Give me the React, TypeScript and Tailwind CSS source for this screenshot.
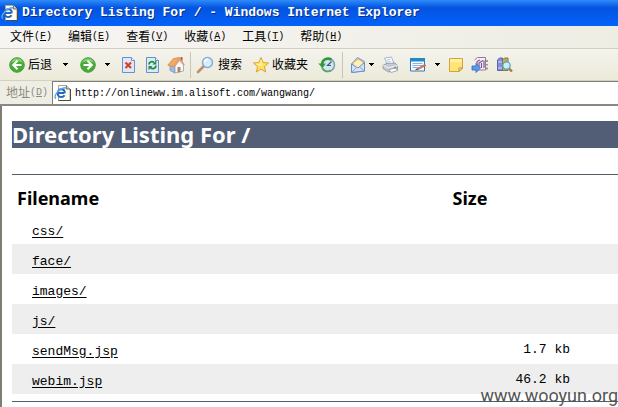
import type { ReactNode } from "react";

const cjk = "font-['Liberation_Sans','Noto_Sans_CJK_SC',sans-serif]";
const mono = "font-['Liberation_Mono','Noto_Sans_CJK_SC',monospace]";
const humanist = "font-['Noto_Sans','Open_Sans',sans-serif]";

const menus = [
  { label: "文件", key: "F" },
  { label: "编辑", key: "E" },
  { label: "查看", key: "V" },
  { label: "收藏", key: "A" },
  { label: "工具", key: "T" },
  { label: "帮助", key: "H" },
];

const files = [
  { name: "css/", size: "" },
  { name: "face/", size: "" },
  { name: "images/", size: "" },
  { name: "js/", size: "" },
  { name: "sendMsg.jsp", size: "1.7 kb" },
  { name: "webim.jsp", size: "46.2 kb" },
];

function Icon({ children }: { children: ReactNode }) {
  return (
    <svg viewBox="0 0 18 18" className="size-[18px] shrink-0" fill="none" aria-hidden="true">
      {children}
    </svg>
  );
}

function PageIcon() {
  return (
    <Icon>
      <path d="M4.500 1.500h8L16 5v11.500H4.500z" fill="#fdfcf0" stroke="#a8a490" />
      <path d="M12.500 1.500V5H16" fill="#d8d4bc" stroke="#6e6a58" />
      <path d="M16.500 5v11.500H4.500" stroke="#4d4a3e" />
      <path
        d="M10.300 9H3.800M10.800 9.300C10.800 6.800 9.300 5.300 7.300 5.300S3.700 7 3.700 9.200s1.500 3.900 3.600 3.900c1.500 0 2.600-.7 3.200-1.900"
        stroke="#2468c4"
        strokeWidth="2"
      />
      <path d="M2 14.500C-1.500 13 5 3.500 12.500 3.800" stroke="#58a8ec" strokeWidth="1.400" />
    </Icon>
  );
}

function ArrowIcon({ forward = false }: { forward?: boolean }) {
  return (
    <Icon>
      <circle cx="9" cy="9" r="7.300" fill="#43ab36" stroke="#4f9f45" />
      <path d="M3 7a6.300 6.300 0 0 1 12 0C12 4.500 6 4.500 3 7z" fill="#85d16f" />
      <path
        d={forward ? "M4.500 9h8M8.500 4.800L12.700 9l-4.200 4.200" : "M13.500 9h-8M9.500 4.800L5.300 9l4.200 4.200"}
        stroke="#fff"
        strokeWidth="2.200"
      />
    </Icon>
  );
}

function StopIcon() {
  return (
    <Icon>
      <path d="M3.500 1.500h9l3 3v12h-12z" fill="#dce9fb" stroke="#6d8fc8" />
      <path d="M12.500 1.500v3h3" fill="#fff" stroke="#6d8fc8" />
      <path d="M6.500 6.500l5.500 5.500M12 6.500L6.500 12" stroke="#df3f1c" strokeWidth="2.200" />
    </Icon>
  );
}

function RefreshIcon() {
  return (
    <Icon>
      <path d="M3.500 1.500h9l3 3v12h-12z" fill="#dce9fb" stroke="#6d8fc8" />
      <path d="M12.500 1.500v3h3" fill="#fff" stroke="#6d8fc8" />
      <path d="M6 8.500c0-3 3-3.500 5-2M13 9.500c0 3.200-3.500 4-5.500 2" stroke="#20923a" strokeWidth="1.800" />
      <path d="M9.500 8.500h3.800V4.200zM9.300 10H5.500v4.300z" fill="#20923a" />
    </Icon>
  );
}

function HomeIcon() {
  return (
    <Icon>
      <path d="M3 9v5.500L8 17V9.500z" fill="#9fbce0" stroke="#8096b8" strokeWidth=".8" />
      <path d="M8 10l4.500-5.500L16.500 9v6L8 17z" fill="#f6f8fc" stroke="#8ba0bd" strokeWidth=".8" />
      <path d="M10.500 11h3v5l-3 .600z" fill="#b48454" />
      <path d="M.8 9.200L6.500 2.500l6-1L7.800 9.500 5 10.500z" fill="#f3ab62" stroke="#d98545" strokeWidth=".8" />
      <path d="M7.500 10l5-7.200L17.300 9" stroke="#e0a068" strokeWidth="1.400" />
      <path d="M13.500 1h2v4.500l-2-2.500z" fill="#c6533b" />
    </Icon>
  );
}

function SearchIcon() {
  return (
    <Icon>
      <path d="M7.500 10.500l-5.500 5.500" stroke="#c08d68" strokeWidth="2.600" strokeLinecap="round" />
      <circle cx="11.500" cy="6.500" r="5" fill="#d7effc" stroke="#8aaad2" strokeWidth="1.500" />
      <path d="M8.500 6c.3-2 1.700-2.800 3.300-2.700" stroke="#fff" strokeWidth="1.500" />
    </Icon>
  );
}

function StarIcon() {
  return (
    <Icon>
      <path
        d="M9 1.500l2.100 5 5.400.500-4.100 3.600 1.300 5.400L9 13.100 4.300 16l1.300-5.400L1.500 7l5.400-.500z"
        fill="#ffe25c"
        stroke="#dfa22f"
        strokeLinejoin="round"
      />
      <path d="M9 4v5L4.500 8" stroke="#fff6b8" strokeWidth="1.200" />
    </Icon>
  );
}

function HistoryIcon() {
  return (
    <Icon>
      <circle cx="10" cy="9" r="6.500" fill="#d3e6f3" stroke="#7f9db0" strokeWidth="1.500" />
      <path d="M13.500 5.500L9.500 9.500H13" stroke="#48596a" strokeWidth="1.200" />
      <path d="M13.500 3.800C9.500 1 4.500 3.500 4 8" stroke="#2f9a39" strokeWidth="2.600" />
      <path d="M.3 7.500h7.600L4.500 12z" fill="#2f9a39" />
      <path d="M4.500 12.500c1.800 3 5 3.800 8 2" stroke="#5aa85e" strokeWidth="1.800" />
    </Icon>
  );
}

function MailIcon() {
  return (
    <Icon>
      <path d="M2.500 8L8.500 1.500l7 4V15l-13 1.500z" fill="#b9d3f4" stroke="#7b98c8" />
      <path d="M4 7L9 3l5 3v4l-5 2.500L4 10z" fill="#fff0b8" stroke="#e0a64c" strokeWidth=".8" />
      <path d="M2.500 8l6.500 4 6.500-5.500V15l-13 1.500z" fill="#d3e4fa" stroke="#6c8dc2" />
      <path d="M2.500 16.500l5-5M15.500 15l-5-4" stroke="#8aa8d5" />
    </Icon>
  );
}

function PrintIcon() {
  return (
    <Icon>
      <path d="M3.500 2l7-1 2.500 7-6 1.500z" fill="#fff" stroke="#8fa3c4" strokeWidth=".8" />
      <path d="M5.500 4l4-.500M6 6l4-.500" stroke="#9db6da" strokeWidth=".8" />
      <path d="M2 9l4-1.500 8-.500 2.500 2.500v4L7.500 16 2 12.500z" fill="#c5c9d4" stroke="#8a90a2" strokeWidth=".8" />
      <path d="M2 9l5.500 3 9-2.500" stroke="#f5f6fa" />
      <path d="M8 13.500l7-1.500 1.500 2.500-6.500 2z" fill="#fff" stroke="#8b91a5" strokeWidth=".8" />
      <path d="M13 11.500h2" stroke="#4fae50" strokeWidth="1.300" />
    </Icon>
  );
}

function EditIcon() {
  return (
    <Icon>
      <path d="M1.500 2.500h14v12.500h-14z" fill="#f6faff" stroke="#2f78b8" />
      <path d="M1 2h15v3.500H1z" fill="#2587c6" />
      <path d="M3.500 7.500h10M3.500 9.500h10M3.500 11.500h6" stroke="#8fb2d8" />
      <path d="M7.500 13L15.500 8.500l1.500 1-8.500 4.500z" fill="#e77851" stroke="#9d5d51" strokeWidth=".6" />
      <path d="M6.500 13.800l2-.8" stroke="#3c3f50" />
    </Icon>
  );
}

function NoteIcon() {
  return (
    <Icon>
      <path d="M2.500 2.500h13v9.500L12 15.500H2.500z" fill="#ffe477" stroke="#d3a536" />
      <path d="M3 3h12v3H3z" fill="#fff0a5" />
      <path d="M15.500 12H12v3.500z" fill="#fff8cd" stroke="#c48d26" />
    </Icon>
  );
}

function ResearchIcon() {
  return (
    <Icon>
      <path d="M3.500 4l3-2.500h8V14H6" fill="#f5eef6" stroke="#8f7b9a" />
      <path d="M6 9V5.500L9 4M8 11V7l4-2.500M10.500 12V7M13 4.500V12" stroke="#80548e" strokeWidth="1.200" />
      <path d="M16 4v2M16 8v1.500M16 11.500v2" stroke="#55405c" />
      <path d="M1 10h4V7.500l4.500 4.500L5 16.500V14H1z" fill="#5a9be8" stroke="#2f6abf" strokeWidth=".8" />
    </Icon>
  );
}

function BooksIcon() {
  return (
    <Icon>
      <path d="M2.500 4l2-2h3v12.500h-5z" fill="#8390d5" stroke="#5965a7" />
      <path d="M7.500 4l2-2h3.500v12.500H7.500z" fill="#b5ae63" stroke="#837c43" />
      <path d="M3 6h4M3 12h4" stroke="#d3d8f7" />
      <path d="M13.500 12l3.500 3.500" stroke="#a8793d" strokeWidth="2.400" />
      <circle cx="11.500" cy="9.500" r="3.700" fill="#c5effa" stroke="#5e9dbd" strokeWidth="1.200" />
    </Icon>
  );
}

function Tool({ label, className = "", children }: { label: string; className?: string; children: ReactNode }) {
  return (
    <button type="button" aria-label={label} className={`flex shrink-0 items-center ${className}`}>
      {children}
    </button>
  );
}

function DropArrow({ label, className = "w-5" }: { label: string; className?: string }) {
  return (
    <button type="button" aria-label={label} className={`flex h-5 shrink-0 items-center justify-center ${className}`}>
      <svg viewBox="0 0 5 3" className="h-[3px] w-[5px]" shapeRendering="crispEdges" aria-hidden="true">
        <path d="M0 0h5v1H4v1H3v1H2V2H1V1H0z" fill="#000" />
      </svg>
    </button>
  );
}

function Separator({ className = "" }: { className?: string }) {
  return <div className={`h-[26px] w-px shrink-0 bg-[#c9c6b8] ${className}`} />;
}

export default function App() {
  return (
    <div className={`relative flex min-h-screen flex-col overflow-hidden bg-white text-xs text-black ${cjk}`}>
      <header
        className={`flex h-[26px] items-center gap-[3px] bg-linear-to-b from-[#2f8bfa] via-[#0453e0] via-30% to-[#0463fb] pl-px ${mono}`}
      >
        <PageIcon />
        <span className="text-[13px] font-bold whitespace-nowrap text-white [text-shadow:1px_1px_0_#0a2f86]">
          Directory Listing For / - Windows Internet Explorer
        </span>
      </header>

      <nav className="flex h-[23px] items-center gap-4 border-b border-[#d3d0c2] bg-linear-to-r from-[#f6f5f3] to-[#eeede4] pl-[10px]">
        {menus.map((m) => (
          <button key={m.key} type="button" className="flex shrink-0 items-center leading-4">
            {m.label}
            <span className={`text-[10px] ${mono}`}>
              (<u>{m.key}</u>)
            </span>
          </button>
        ))}
      </nav>

      <div className="flex h-8 items-center border-b border-[#d3d0c2] bg-linear-to-b from-[#f4f3ed] to-[#ecead9] pl-2">
        <Tool label="后退" className="gap-[2px]">
          <ArrowIcon />
          <span>后退</span>
        </Tool>
        <DropArrow label="后退列表" className="ml-[3px] w-5" />
        <Tool label="前进" className="ml-1">
          <ArrowIcon forward />
        </Tool>
        <DropArrow label="前进列表" className="w-5" />
        <Tool label="停止" className="ml-[2px]">
          <StopIcon />
        </Tool>
        <Tool label="刷新" className="ml-[6px]">
          <RefreshIcon />
        </Tool>
        <Tool label="主页" className="ml-[6px]">
          <HomeIcon />
        </Tool>
        <Separator className="mx-[5px]" />
        <Tool label="搜索" className="gap-1">
          <SearchIcon />
          <span>搜索</span>
        </Tool>
        <Tool label="收藏夹" className="ml-[10px] gap-[2px]">
          <StarIcon />
          <span>收藏夹</span>
        </Tool>
        <Tool label="历史" className="ml-[10px]">
          <HistoryIcon />
        </Tool>
        <Separator className="mx-[6px]" />
        <Tool label="邮件">
          <MailIcon />
        </Tool>
        <DropArrow label="邮件选项" className="w-2" />
        <Tool label="打印" className="ml-[6px]">
          <PrintIcon />
        </Tool>
        <Tool label="编辑" className="ml-[10px]">
          <EditIcon />
        </Tool>
        <DropArrow label="编辑选项" className="w-5" />
        <Tool label="讨论">
          <NoteIcon />
        </Tool>
        <Tool label="信息检索" className="ml-[6px]">
          <ResearchIcon />
        </Tool>
        <Tool label="参考资料" className="ml-[6px]">
          <BooksIcon />
        </Tool>
      </div>

      <div className="flex h-[25px] items-stretch border-b-2 border-[#8a8880] bg-[#efeee5] pl-[6px]">
        <label htmlFor="address" className="flex w-[46px] shrink-0 items-center text-[#8c8a7e]">
          地址
          <span className={`text-[10px] ${mono}`}>
            (<u>D</u>)
          </span>
        </label>
        <div className="flex min-w-0 flex-1 items-center gap-[3px] border-t border-l border-[#7f7d74] bg-white pl-px">
          <PageIcon />
          <input
            id="address"
            type="text"
            defaultValue="http://onlineww.im.alisoft.com/wangwang/"
            className={`min-w-0 flex-1 bg-transparent pt-px text-[10px] leading-4 outline-none ${mono}`}
          />
        </div>
      </div>

      <main className="flex-1 border-l-2 border-[#807d74] pt-[15px] pl-[10px]">
        <h1 className={`bg-[#525d76] text-[22px] leading-[27px] font-bold text-white ${humanist}`}>
          Directory Listing For /
        </h1>
        <hr className="mt-[26px] border-t border-[#525d66]" />
        <table className="mt-[9px] w-full table-fixed border-collapse">
          <colgroup>
            <col />
            <col className="w-[210px]" />
            <col className="w-[43px]" />
          </colgroup>
          <thead>
            <tr className={`h-[30px] text-lg leading-6 ${humanist}`}>
              <th className="p-0 pb-[2px] pl-[5px] text-left font-bold">Filename</th>
              <th className="p-0 pb-[2px] font-bold">Size</th>
              <td />
            </tr>
          </thead>
          <tbody className={`text-[13px] leading-4 ${mono}`}>
            {files.map((f) => (
              <tr key={f.name} className="h-[30px] even:bg-[#eeeeee]">
                <td className="p-0 pt-[5px] pl-5">
                  <a href={f.name} className="underline underline-offset-2">
                    {f.name}
                  </a>
                </td>
                <td className="p-0 pt-[2px] pr-[5px] text-right">{f.size}</td>
                <td />
              </tr>
            ))}
          </tbody>
        </table>
        <hr className="mt-[7px] border-t border-[#525d66]" />
      </main>

      <div className="absolute right-0 bottom-0 font-['Roboto',sans-serif] text-[18px] leading-[22px] text-[#555555]">
        www.wooyun.org
      </div>
    </div>
  );
}
